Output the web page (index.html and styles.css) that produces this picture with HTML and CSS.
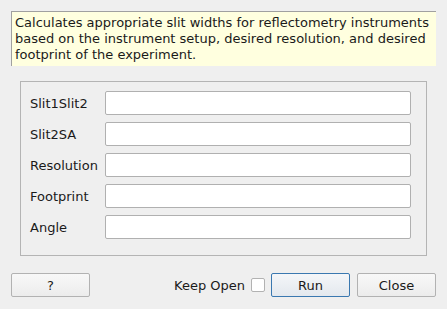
FILE: index.html
```html
<!DOCTYPE html>
<html lang="en">
<head>
    <meta charset="UTF-8">
    <title>Slit Calculator</title>
    <link rel="stylesheet" href="styles.css">
</head>
<body>
    <div class="dialog">
        <div class="descrizione">Calculates appropriate slit widths for reflectometry instruments<br>based on the instrument setup, desired resolution, and desired<br>footprint of the experiment.</div>
        <div class="gruppo">
            <div class="riga"><label>Slit1Slit2</label><input type="text" class="campo"></div>
            <div class="riga"><label>Slit2SA</label><input type="text" class="campo"></div>
            <div class="riga"><label>Resolution</label><input type="text" class="campo"></div>
            <div class="riga"><label>Footprint</label><input type="text" class="campo"></div>
            <div class="riga"><label>Angle</label><input type="text" class="campo"></div>
        </div>
        <div class="pulsanti">
            <button type="button" class="bottone">?</button>
            <span class="spazio"></span>
            <span class="keep">Keep Open</span>
            <span class="check"></span>
            <button type="button" class="bottone predefinito">Run</button>
            <button type="button" class="bottone">Close</button>
        </div>
    </div>
</body>
</html>
```

FILE: styles.css
```css
body {
    margin: 0;
    background: #efefef;
    font-family: "DejaVu Sans", sans-serif;
    font-size: 13px;
    color: #1a1a1a;
}

.dialog {
    width: 447px;
    height: 309px;
    padding: 11px 11px 0 11px;
    box-sizing: border-box;
}

.descrizione {
    background: #ffffdf;
    border-top: 1px solid #a0a0a0;
    border-left: 1px solid #a0a0a0;
    padding: 3px 2px 3px 3px;
    line-height: 16px;
    height: 48px;
    white-space: nowrap;
}

.gruppo {
    margin: 15px 9px 0 9px;
    border: 1px solid #b4b4b4;
    padding: 9px 15px 16px 9px;
    display: flex;
    flex-direction: column;
    gap: 7px;
}

.riga {
    display: flex;
    align-items: center;
    height: 24px;
}

.riga label {
    width: 75px;
}

.campo {
    flex: 1;
    height: 24px;
    box-sizing: border-box;
    border: 1px solid #b0b0b0;
    border-radius: 2px;
    background: #ffffff;
    font-family: inherit;
    font-size: 13px;
    outline: none;
}

.pulsanti {
    display: flex;
    align-items: center;
    margin-top: 17px;
}

.spazio {
    flex: 1;
}

.bottone {
    width: 79px;
    height: 24px;
    border: 1px solid #b2b2b2;
    border-radius: 2px;
    background: linear-gradient(to bottom, #f8f8f8, #ececec);
    font-family: inherit;
    font-size: 13px;
    color: #1a1a1a;
    padding: 0;
}

.predefinito {
    border-color: #3a78b0;
    background: linear-gradient(to bottom, #f4f6f9, #e3e8ee);
    margin-right: 7px;
}

.keep {
    margin-right: 6px;
}

.check {
    width: 12px;
    height: 12px;
    border: 1px solid #b2b2b2;
    border-radius: 2px;
    background: #ffffff;
    margin-right: 6px;
}
```
